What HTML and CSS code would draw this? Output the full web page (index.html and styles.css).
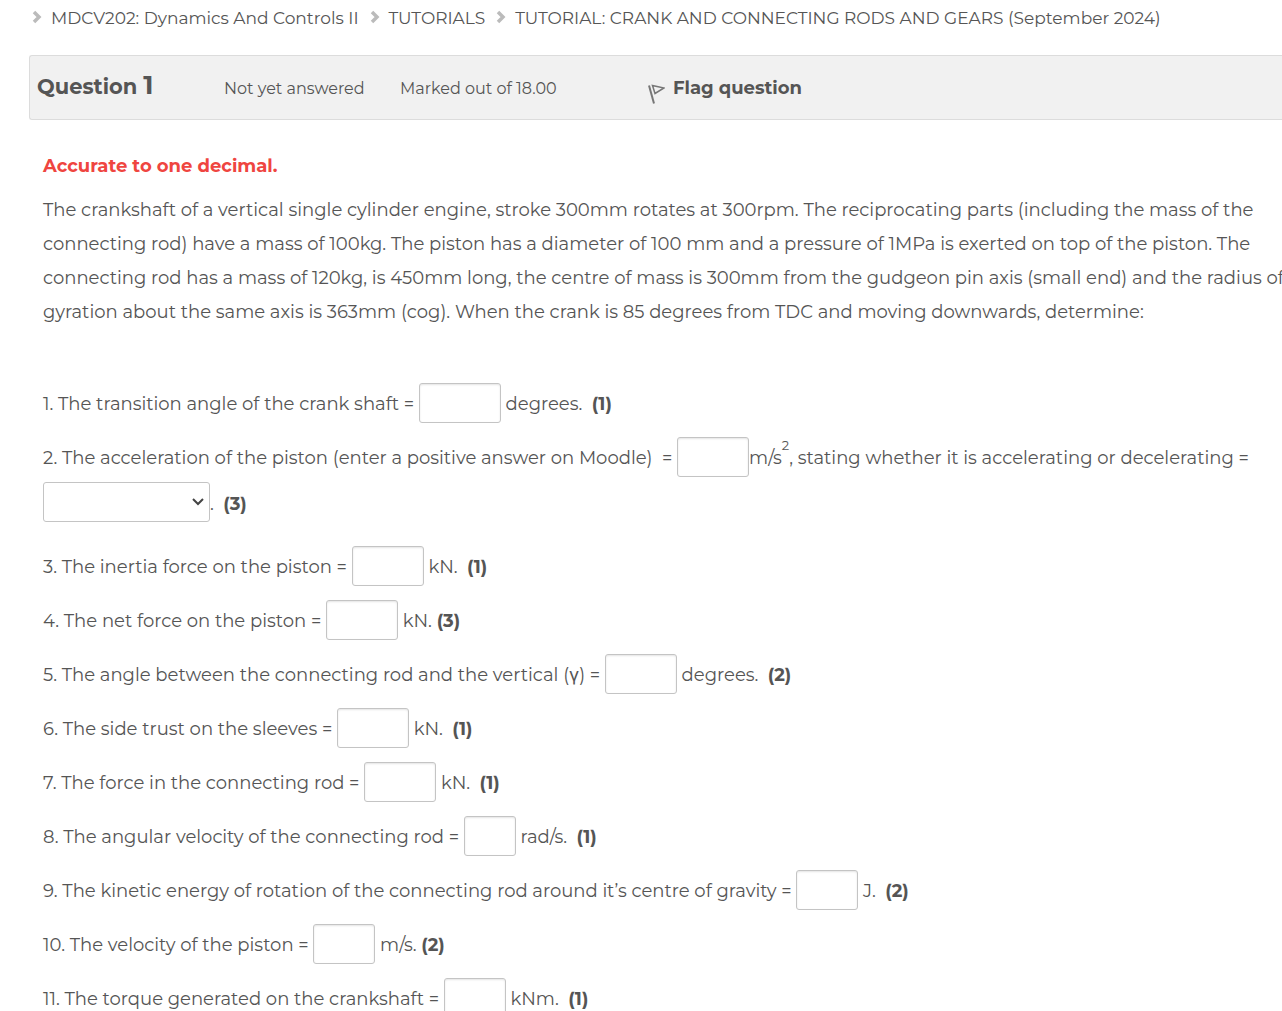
FILE: index.html
```html
<!DOCTYPE html>
<html lang="en">
<head>
    <meta charset="UTF-8">
    <title>MDCV202: Dynamics And Controls II</title>
    <link rel="stylesheet" href="styles.css">
</head>
<body>
<nav class="breadcrumb">
    <svg class="arrow" viewBox="0 0 12 16"><path d="M4 3l5 5-5 5"/></svg>
    <a href="#">MDCV202: Dynamics And Controls II</a>
    <svg class="arrow" viewBox="0 0 12 16"><path d="M4 3l5 5-5 5"/></svg>
    <a href="#">TUTORIALS</a>
    <svg class="arrow" viewBox="0 0 12 16"><path d="M4 3l5 5-5 5"/></svg>
    <a href="#">TUTORIAL: CRANK AND CONNECTING RODS AND GEARS (September 2024)</a>
</nav>

<div class="info">
    <h3 class="no">Question <span class="qno">1</span></h3>
    <div class="state">Not yet answered</div>
    <div class="grade">Marked out of 18.00</div>
    <button class="flag" type="button">
        <svg viewBox="0 0 18 20"><path class="pole" d="M2 1.500l5 18"/><path class="cloth" d="M5.500 1.500l11.500 2.500-9 5.500z"/></svg>
        Flag question
    </button>
</div>

<form class="formulation">
    <p class="note">Accurate to one decimal.</p>
    <p class="text">The crankshaft of a vertical single cylinder engine, stroke 300mm rotates at 300rpm. The reciprocating parts (including the mass of the<br>
        connecting rod) have a mass of 100kg. The piston has a diameter of 100 mm and a pressure of 1MPa is exerted on top of the piston. The<br>
        connecting rod has a mass of 120kg, is 450mm long, the centre of mass is 300mm from the gudgeon pin axis (small end) and the radius of<br>
        gyration about the same axis is 363mm (cog). When the crank is 85 degrees from TDC and moving downwards, determine:</p>

    <div class="row"><label for="q1">1. The transition angle of the crank shaft =</label> <input class="w82" type="text" id="q1"> degrees. &nbsp;<b>(1)</b></div>
    <div class="row"><label for="q2">2. The acceleration of the piston (enter a positive answer on Moodle) &nbsp;=</label> <input class="w72" type="text" id="q2">m/s<sup>2</sup>, <label for="q2b">stating whether it is accelerating or decelerating =</label></div>
    <div class="row choice"><span class="select"><select id="q2b"><option></option><option>accelerating</option><option>decelerating</option></select><svg viewBox="0 0 14 10"><path d="M2 2l5 5 5-5"/></svg></span>. &nbsp;<b>(3)</b></div>
    <div class="row"><label for="q3">3. The inertia force on the piston =</label> <input class="w72" type="text" id="q3"> kN. &nbsp;<b>(1)</b></div>
    <div class="row"><label for="q4">4. The net force on the piston =</label> <input class="w72" type="text" id="q4"> kN. <b>(3)</b></div>
    <div class="row"><label for="q5">5. The angle between the connecting rod and the vertical (γ) =</label> <input class="w72" type="text" id="q5"> degrees. &nbsp;<b>(2)</b></div>
    <div class="row"><label for="q6">6. The side trust on the sleeves =</label> <input class="w72" type="text" id="q6"> kN. &nbsp;<b>(1)</b></div>
    <div class="row"><label for="q7">7. The force in the connecting rod =</label> <input class="w72" type="text" id="q7"> kN. &nbsp;<b>(1)</b></div>
    <div class="row"><label for="q8">8. The angular velocity of the connecting rod =</label> <input class="w52" type="text" id="q8"> rad/s. &nbsp;<b>(1)</b></div>
    <div class="row"><label for="q9">9. The kinetic energy of rotation of the connecting rod around it’s centre of gravity =</label> <input class="w62" type="text" id="q9"> J. &nbsp;<b>(2)</b></div>
    <div class="row"><label for="q10">10. The velocity of the piston =</label> <input class="w62" type="text" id="q10"> m/s. <b>(2)</b></div>
    <div class="row"><label for="q11">11. The torque generated on the crankshaft =</label> <input class="w62" type="text" id="q11"> kNm. &nbsp;<b>(1)</b></div>
</form>
</body>
</html>
```
FILE: styles.css
```css
*{
    box-sizing: border-box;
}
body{
    margin: 0;
    padding-left: 29px;
    font-family: Montserrat, Inter, "Open Sans", sans-serif;
    font-size: 18px;
    color: #555;
    background-color: #fff;
    overflow: hidden;
}
.breadcrumb{
    display: flex;
    align-items: center;
    gap: 9px;
    height: 36px;
    padding-left: 1px;
    font-size: 17px;
    white-space: nowrap;
}
.breadcrumb a{
    color: #555;
    text-decoration: none;
}
.arrow{
    flex: none;
    width: 12px;
    height: 16px;
    margin-bottom: 2px;
    fill: none;
    stroke: #bbb;
    stroke-width: 3.5;
}
.info{
    display: flex;
    align-items: center;
    height: 65px;
    margin-top: 19px;
    padding-left: 7px;
    border: 1px solid #dcdcdc;
    border-right: 0;
    border-radius: 3px 0 0 3px;
    background-color: #f1f1f1;
    font-size: 16px;
}
.no{
    width: 187px;
    margin: 0;
    padding-bottom: 5px;
    font-size: 21px;
}
.qno{
    font-size: 26px;
}
.state{
    width: 176px;
    padding-top: 2px;
}
.grade{
    width: 247px;
    padding-top: 2px;
}
.flag{
    display: flex;
    align-items: center;
    gap: 8px;
    padding: 0;
    border: 0;
    background: none;
    color: #555;
    font-family: inherit;
    font-size: 18px;
    font-weight: bold;
}
.flag svg{
    width: 18px;
    height: 20px;
    margin-top: 12px;
    fill: none;
    stroke: #777;
}
.pole{
    stroke-width: 2;
}
.cloth{
    stroke-width: 1.5;
}
.formulation{
    padding: 29px 0 0 14px;
    white-space: nowrap;
}
.note{
    margin: 0 0 10px;
    line-height: 34px;
    font-weight: bold;
    color: #ef4540;
}
.text{
    margin: 0 0 54px;
    line-height: 34px;
}
.row{
    height: 40px;
    margin-bottom: 14px;
    line-height: 42px;
}
.row input,
.row select{
    height: 40px;
    padding: 0 8px;
    border: 1px solid #c4c4c4;
    border-radius: 3px;
    background-color: #fff;
    color: #555;
    font-family: inherit;
    font-size: 18px;
    vertical-align: top;
}
.row input{
    box-shadow: inset 0 1px 2px #e4e4e4;
}
.select{
    position: relative;
    display: inline-block;
    height: 40px;
    vertical-align: top;
}
.row select{
    width: 167px;
    appearance: none;
}
.select svg{
    position: absolute;
    top: 15px;
    right: 5px;
    width: 14px;
    height: 10px;
    fill: none;
    stroke: #444;
    stroke-width: 2;
    pointer-events: none;
}
.choice{
    margin-top: -9px;
    margin-bottom: 24px;
    line-height: 44px;
}
.w82{
    width: 82px;
}
.w72{
    width: 72px;
}
.w62{
    width: 62px;
}
.w52{
    width: 52px;
}
sup{
    font-size: 13px;
    line-height: 0;
    vertical-align: 14px;
}
```
